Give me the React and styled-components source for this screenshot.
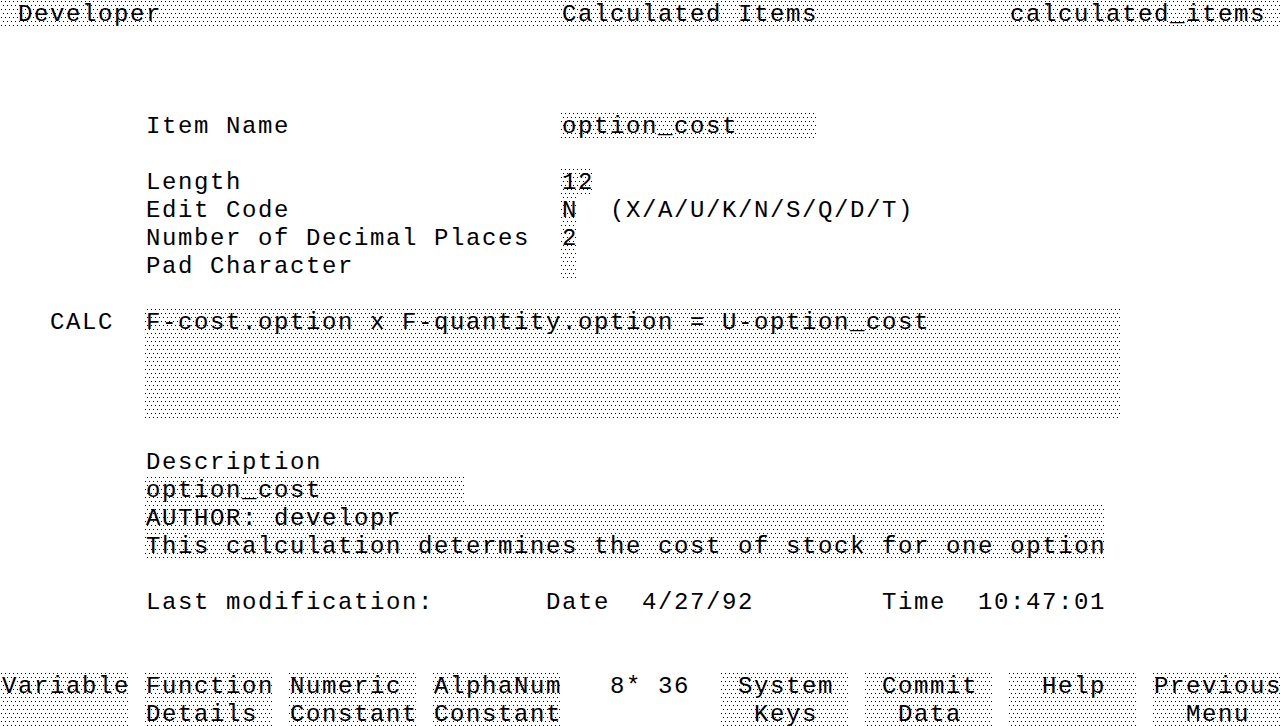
import React from 'react'
import styled, { createGlobalStyle, css } from 'styled-components'

const GlobalStyle = createGlobalStyle`
  html, body {
    margin: 0;
    padding: 0;
    background: #fff;
    overflow: hidden;
  }
`

// sparse 1px dot dither used by the terminal for input fields and keys
const dither = css`
  background-color: #fff;
  background-image: conic-gradient(at 1px 1px, transparent 75%, #000 0),
    conic-gradient(at 1px 1px, transparent 75%, #000 0);
  background-size: 4px 8px;
  background-position: 1px 1px, 3px 5px;
  background-attachment: fixed;
`

const place = css`
  grid-column: ${(p) => p.$col + 1} / span ${(p) => p.$w || 1};
  grid-row: ${(p) => p.$row + 1} / span ${(p) => p.$h || 1};
  box-sizing: border-box;
`

const Screen = styled.div`
  display: grid;
  grid-template-columns: repeat(80, 16px);
  grid-template-rows: repeat(26, 28px);
  width: 1280px;
  height: 728px;
  font-family: 'Liberation Mono', 'DejaVu Sans Mono', monospace;
  font-size: 24px;
  line-height: 28px;
  letter-spacing: 1.6px;
  color: #000;
`

const TitleBar = styled.div`
  ${place}
  ${dither}
`

const Label = styled.div`
  ${place}
  white-space: pre;
  padding: 1px 0 0 2px;
`

const Field = styled.div`
  ${place}
  ${dither}
  white-space: pre;
  padding: 1px 0 0 2px;
`

const KeyCap = styled.div`
  ${place}
  ${dither}
  display: flex;
  flex-direction: column;
  white-space: pre;
  padding: 1px 0 0 2px;
`

const KeyLine = styled.span`
  height: 28px;
`

const keys = [
  { col: 0, lines: ['Variable', ''] },
  { col: 9, lines: ['Function', 'Details'] },
  { col: 18, lines: ['Numeric', 'Constant'] },
  { col: 27, lines: ['AlphaNum', 'Constant'] },
  { col: 45, lines: [' System', '  Keys'] },
  { col: 54, lines: [' Commit', '  Data'] },
  { col: 63, lines: ['  Help', ''] },
  { col: 72, lines: ['Previous', '  Menu'] },
]

export default function App() {
  return (
    <>
      <GlobalStyle />
      <Screen>
        <TitleBar $row={0} $col={0} $w={80} />
        <Label $row={0} $col={1} $w={20}>Developer</Label>
        <Label $row={0} $col={35} $w={20}>Calculated Items</Label>
        <Label $row={0} $col={63} $w={17}>calculated_items</Label>

        <Label $row={4} $col={9} $w={20}>Item Name</Label>
        <Field $row={4} $col={35} $w={16}>option_cost</Field>

        <Label $row={6} $col={9} $w={20}>Length</Label>
        <Field $row={6} $col={35} $w={2}>12</Field>
        <Label $row={7} $col={9} $w={20}>Edit Code</Label>
        <Field $row={7} $col={35} $w={1}>N</Field>
        <Label $row={7} $col={38} $w={20}>(X/A/U/K/N/S/Q/D/T)</Label>
        <Label $row={8} $col={9} $w={25}>Number of Decimal Places</Label>
        <Field $row={8} $col={35} $w={1}>2</Field>
        <Label $row={9} $col={9} $w={20}>Pad Character</Label>
        <Field $row={9} $col={35} $w={1} />

        <Label $row={11} $col={3} $w={4}>CALC</Label>
        <Field $row={11} $col={9} $w={61} $h={4}>
          F-cost.option x F-quantity.option = U-option_cost
        </Field>

        <Label $row={16} $col={9} $w={20}>Description</Label>
        <Field $row={17} $col={9} $w={20}>option_cost</Field>
        <Field $row={18} $col={9} $w={60}>AUTHOR: developr</Field>
        <Field $row={19} $col={9} $w={60}>
          This calculation determines the cost of stock for one option
        </Field>

        <Label $row={21} $col={9} $w={20}>Last modification:</Label>
        <Label $row={21} $col={34} $w={4}>Date</Label>
        <Label $row={21} $col={40} $w={8}>4/27/92</Label>
        <Label $row={21} $col={55} $w={4}>Time</Label>
        <Label $row={21} $col={61} $w={8}>10:47:01</Label>

        {keys.map((k) => (
          <KeyCap key={k.col} $row={24} $col={k.col} $w={8} $h={2}>
            <KeyLine>{k.lines[0]}</KeyLine>
            <KeyLine>{k.lines[1]}</KeyLine>
          </KeyCap>
        ))}
        <Label $row={24} $col={38} $w={5}>8* 36</Label>
      </Screen>
    </>
  )
}
